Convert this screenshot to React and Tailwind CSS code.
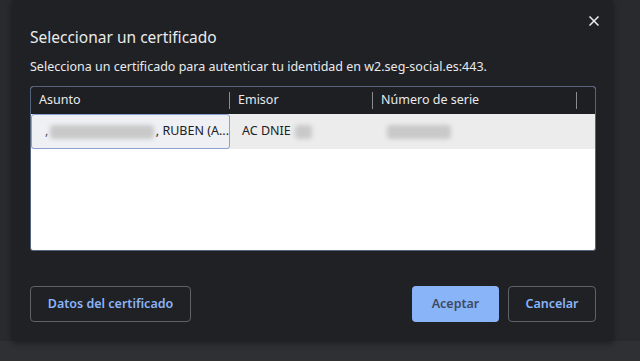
import { X } from 'lucide-react';

const Blur = ({ className }) => (
  <span className={`inline-block h-[14px] rounded-sm bg-[#c9c9c9] blur-[2px] ${className}`} />
);

export default function App() {
  return (
    <div
      className="w-[640px] h-[361px] bg-[#2f3033] overflow-hidden"
      style={{ fontFamily: '"Segoe UI", "Noto Sans", "Open Sans", sans-serif' }}
    >
      <div className="h-[341px] pl-[12px] pr-[27px] bg-[#292a2d]">
        <div className="relative h-full pt-[3px] bg-[#202124] shadow-[0_2px_6px_rgba(0,0,0,0.4)]">
          {/* Close */}
          <button className="absolute right-[11px] top-[13px] text-[#e8eaed]">
            <X size={16} strokeWidth={2.5} />
          </button>

          <div className="px-[18px]">
            <h1 className="pt-[24px] text-[15.5px] leading-[20px] text-[#e8eaed]">Seleccionar un certificado</h1>
            <p className="mt-[12px] text-[12.5px] leading-[16px] text-[#e8eaed]">
              Selecciona un certificado para autenticar tu identidad en w2.seg-social.es:443.
            </p>

            {/* Table */}
            <div className="mt-[11px] h-[165px] w-[566px] rounded-[3px] border border-[#56637e] bg-white overflow-hidden">
              <div className="flex h-[27px] items-center bg-[#1e1f22] text-[12.5px] text-[#e8eaed]">
                <div className="flex w-[199px] h-full items-center justify-between pl-[8px]">
                  <span>Asunto</span>
                  <span className="h-[17px] w-px bg-[#8a8b8e]" />
                </div>
                <div className="flex w-[143px] h-full items-center justify-between pl-[8px]">
                  <span>Emisor</span>
                  <span className="h-[17px] w-px bg-[#8a8b8e]" />
                </div>
                <div className="flex w-[204px] h-full items-center justify-between pl-[8px]">
                  <span>Número de serie</span>
                  <span className="h-[17px] w-px bg-[#8a8b8e]" />
                </div>
              </div>
              <div className="flex h-[35px] items-center bg-[#ececec] text-[12.5px] text-[#202124] whitespace-nowrap">
                <div className="flex h-[35px] w-[199px] shrink-0 items-center rounded-[3px] border border-[#8aa2cf] bg-[#eef0f4] pl-[13px] overflow-hidden">
                  <span className="text-[#555]">,</span>
                  <Blur className="ml-[2px] w-[106px]" />
                  <span className="ml-[2px]">, RUBEN (A...</span>
                </div>
                <div className="flex w-[143px] shrink-0 items-center pl-[12px]">
                  <span>AC DNIE</span>
                  <Blur className="ml-[4px] w-[17px]" />
                </div>
                <div className="flex items-center pl-[14px]">
                  <Blur className="w-[64px]" />
                </div>
              </div>
            </div>

            {/* Buttons */}
            <div className="mt-[35px] flex items-center justify-between w-[566px]">
              <button className="h-[36px] w-[161px] rounded-[4px] border border-[#5f6368] text-[12.5px] font-semibold text-[#8ab4f8]">
                Datos del certificado
              </button>
              <div className="flex gap-[9px]">
                <button className="h-[36px] w-[87px] rounded-[4px] bg-[#8ab4f8] text-[12.5px] font-semibold text-[#3c4a63]">
                  Aceptar
                </button>
                <button className="h-[36px] w-[88px] rounded-[4px] border border-[#5f6368] text-[12.5px] font-semibold text-[#8ab4f8]">
                  Cancelar
                </button>
              </div>
            </div>
          </div>
        </div>
      </div>
    </div>
  );
}
